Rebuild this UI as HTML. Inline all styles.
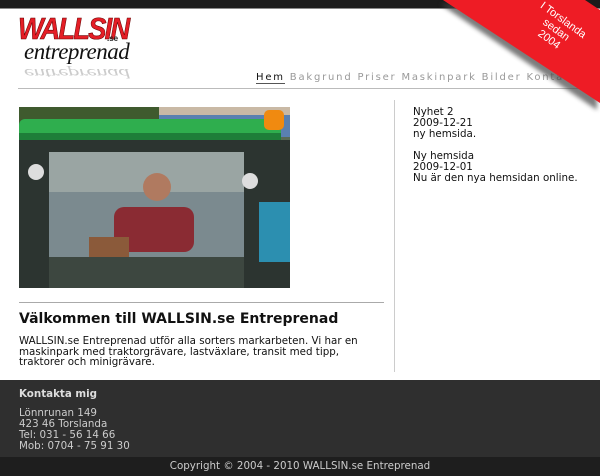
<!DOCTYPE html>
<html><head><meta charset="utf-8"><style>
*{margin:0;padding:0;box-sizing:border-box}
body{width:600px;height:476px;overflow:hidden;background:#fff;font-family:"DejaVu Sans",Verdana,sans-serif;position:relative;color:#111}
.abs{position:absolute}
#top{left:0;top:0;width:600px;height:9px;background:#1b1b1b;border-bottom:1px solid #888}
#logo1{left:18px;top:12px;font:italic bold 31px/34px "Liberation Sans",sans-serif;color:#e41e26;letter-spacing:-2px;transform:scaleX(0.88);transform-origin:left;-webkit-text-stroke:0.6px #600}
#se{left:107px;top:34px;font:bold 8px "Liberation Sans",sans-serif;color:#222}
#logo2{left:24px;top:39px;font:italic 23px/26px "Liberation Serif",serif;color:#111;letter-spacing:-0.5px}
#refl{left:24px;top:61px;height:26px;font:italic 23px/26px "Liberation Serif",serif;color:#ccc;transform:scaleY(-0.6);transform-origin:0 0;letter-spacing:-0.5px;margin-top:20px}
#nav{left:256px;top:72px;font-size:10px;letter-spacing:1.8px;color:#999;white-space:nowrap}
#nav b{font-weight:normal;color:#111;border-bottom:1px solid #555}
#hr1{left:18px;top:88px;width:563px;height:1px;background:#bbb}
#vline{left:394px;top:100px;width:1px;height:272px;background:#ccc}
#hr2{left:19px;top:302px;width:365px;height:1px;background:#aaa}
h1{position:absolute;left:19px;top:311px;font-size:14px;font-weight:bold;color:#111}
#p{left:19px;top:336px;font-size:10.3px;line-height:10.5px;width:362px}
#news{left:413px;top:107px;font-size:10.3px;line-height:11px}
#foot{left:0;top:380px;width:600px;height:77px;background:#2f2f2f;color:#ccc;font-size:10.3px;line-height:11px}
#foot b{position:absolute;left:19px;top:9px;color:#ddd}
#foot div{position:absolute;left:19px;top:28px}
#copy{left:0;top:457px;width:600px;height:19px;background:#1e1e1e;color:#ccc;font-size:10.3px;text-align:center;line-height:19px}
</style></head><body>
<div id="top" class="abs"></div>
<div id="logo1" class="abs">WALLSIN</div>
<div id="se" class="abs">.se</div>
<div id="logo2" class="abs">entreprenad</div>
<div id="refl" class="abs">entreprenad</div>
<div id="nav" class="abs"><b>Hem</b> Bakgrund Priser Maskinpark Bilder Kontakt</div>
<div id="hr1" class="abs"></div>
<svg class="abs" style="left:19px;top:107px" width="271" height="181" viewBox="0 0 271 181">
<rect width="271" height="181" fill="#5a6a55"/>
<rect width="150" height="30" fill="#3f5a2e"/>
<rect x="140" width="131" height="30" fill="#5a80b0"/>
<rect x="140" y="0" width="131" height="8" fill="#c9b9a5"/>
<rect x="0" y="12" width="262" height="20" rx="6" fill="#2fae4e"/>
<rect x="0" y="26" width="262" height="7" fill="#1e7e39"/>
<rect x="245" y="3" width="20" height="20" rx="5" fill="#f08a10"/>
<rect x="0" y="33" width="271" height="148" fill="#2c3430"/>
<rect x="30" y="45" width="195" height="135" fill="#7b8a8f"/>
<rect x="30" y="45" width="195" height="40" fill="#9aa5a3"/>
<circle cx="138" cy="80" r="14" fill="#b07a60"/>
<rect x="95" y="100" width="80" height="45" rx="10" fill="#8a2b33"/>
<rect x="70" y="130" width="40" height="30" fill="#8b5a3a"/>
<rect x="30" y="150" width="195" height="31" fill="#3d4740"/>
<rect x="240" y="95" width="31" height="60" fill="#2c8fb0"/>
<circle cx="17" cy="65" r="8" fill="#ddd"/><circle cx="231" cy="74" r="8" fill="#ddd"/>
</svg>
<div id="hr2" class="abs"></div>
<h1>Välkommen till WALLSIN.se Entreprenad</h1>
<div id="p" class="abs">WALLSIN.se Entreprenad utför alla sorters markarbeten. Vi har en maskinpark med traktorgrävare, lastväxlare, transit med tipp, traktorer och minigrävare.</div>
<div id="vline" class="abs"></div>
<div id="news" class="abs">Nyhet 2<br>2009-12-21<br>ny hemsida.<br><br>Ny hemsida<br>2009-12-01<br>Nu är den nya hemsidan online.</div>
<div id="foot" class="abs"><b>Kontakta mig</b><div>Lönnrunan 149<br>423 46 Torslanda<br>Tel: 031 - 56 14 66<br>Mob: 0704 - 75 91 30</div></div>
<div id="copy" class="abs">Copyright © 2004 - 2010 WALLSIN.se Entreprenad</div>
<svg class="abs" style="left:0;top:0" width="600" height="476">
<defs><filter id="s"><feGaussianBlur stdDeviation="2"/></filter></defs>
<polygon points="443,0 585,0 600,10 600,106" fill="#444" filter="url(#s)" transform="translate(-3,4)" opacity=".7"/>
<polygon points="443,0 585,0 600,10 600,103" fill="#ee1c25"/>
<g transform="translate(556,30) rotate(36)" fill="#fff" font-family="Liberation Sans,sans-serif" font-size="11" text-anchor="middle">
<text x="0" y="-9">I Torslanda</text><text x="0" y="3">sedan</text><text x="0" y="15">2004</text></g>
</svg>
</body></html>
